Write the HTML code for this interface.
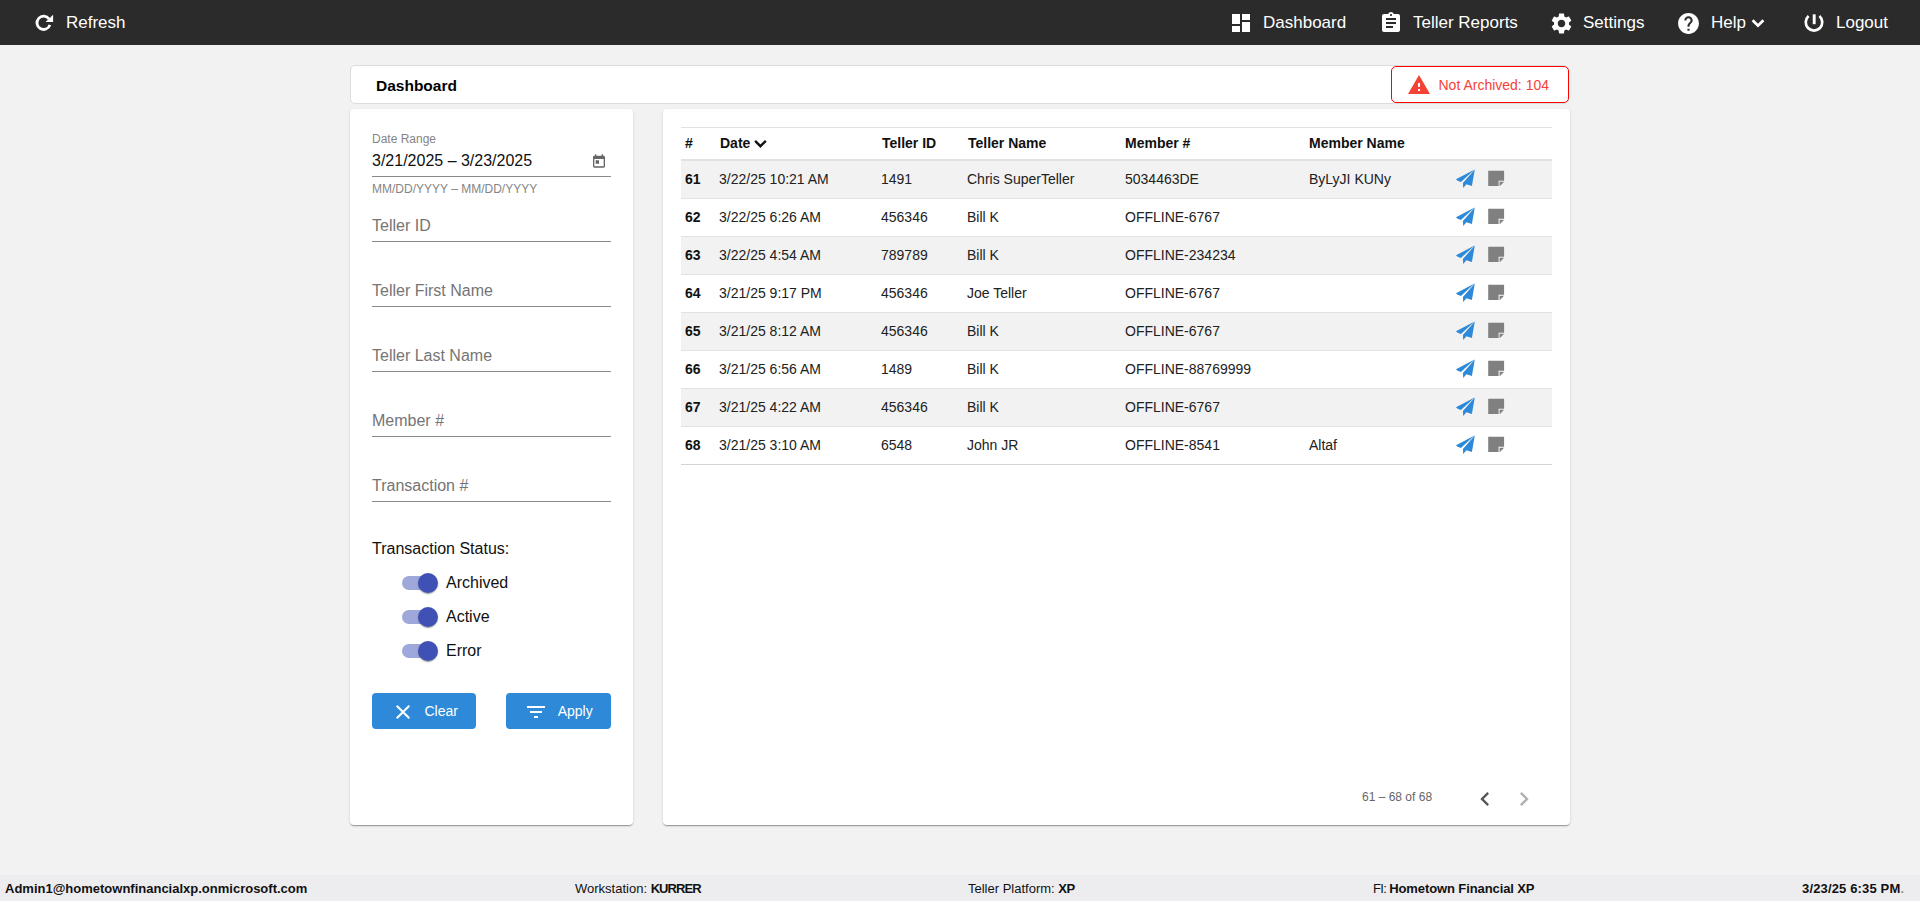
<!DOCTYPE html>
<html><head><meta charset="utf-8">
<style>
*{box-sizing:border-box;margin:0;padding:0}
html,body{width:1920px;height:901px;overflow:hidden;background:#f2f2f2;font-family:"Liberation Sans",sans-serif;color:#212121}
.abs{position:absolute;white-space:nowrap}
.nav{position:absolute;left:0;top:0;width:1920px;height:45px;background:#2b2b2b;color:#fff}
.nav .it{position:absolute;top:0;height:45px;display:flex;align-items:center;font-size:17px;white-space:nowrap}
.nav svg{fill:#fff;display:block}
.card{position:absolute;background:#fff;border-radius:4px;box-shadow:0 2px 1px -1px rgba(0,0,0,.2),0 1px 1px 0 rgba(0,0,0,.14),0 1px 3px 0 rgba(0,0,0,.12)}
.lbl{color:#757575}
.uline{position:absolute;height:1px;background:#8a8a8a}
.cell{position:absolute;white-space:nowrap;font-size:14px;color:#212121}
.hcell{position:absolute;white-space:nowrap;font-size:14px;font-weight:bold;color:#111}
.footer{position:absolute;left:0;top:875px;width:1920px;height:26px;background:#ededf0;font-size:13px;color:#111}
.footer .abs{top:6px}
.btn{position:absolute;background:#2e8ad8;border-radius:4px;color:#fff;font-size:14px}
</style></head><body>

<div class="nav">
<svg class="abs" style="left:35px;top:14px" width="20" height="18" viewBox="0 0 20 18"><path d="M14.05 5.04 A6.65 6.65 0 1 0 14.92 10.9" fill="none" stroke="#fff" stroke-width="2.8"/><path d="M18.1 0.8 L18.1 8 L10.5 8 Z" fill="#fff"/></svg>
<div class="abs" style="left:66px;top:13px;font-size:17px">Refresh</div>
<div class="it" style="left:1229px">
    <svg width="24" height="24" viewBox="0 0 24 24"><path d="M3 13h8V3H3v10zm0 8h8v-6H3v6zm10 0h8V11h-8v10zm0-18v6h8V3h-8z"/></svg>
    <span style="margin-left:10px">Dashboard</span>
  </div>
  <div class="it" style="left:1379px">
    <svg width="24" height="24" viewBox="0 0 24 24"><path d="M19 3h-4.18C14.4 1.840 13.3 1 12 1c-1.3 0-2.4.84-2.82 2H5c-1.1 0-2 .9-2 2v14c0 1.1.9 2 2 2h14c1.1 0 2-.9 2-2V5c0-1.1-.9-2-2-2zm-7 0c.55 0 1 .45 1 1s-.45 1-1 1-1-.45-1-1 .45-1 1-1zm2 14H7v-2h7v2zm3-4H7v-2h10v2zm0-4H7V7h10v2z"/></svg>
    <span style="margin-left:10px">Teller Reports</span>
  </div>
  <div class="it" style="left:1549px">
    <svg width="25" height="25" viewBox="0 0 24 24" style="position:relative;top:0.7px"><path d="M19.14 12.94c.04-.3.06-.61.06-.94 0-.32-.02-.64-.07-.94l2.03-1.58c.18-.14.23-.41.12-.61l-1.920-3.32c-.12-.22-.37-.29-.59-.22l-2.39.96c-.5-.38-1.03-.7-1.62-.94l-.36-2.54c-.04-.24-.24-.41-.48-.41h-3.84c-.24 0-.43.17-.47.41l-.36 2.54c-.59.24-1.13.57-1.62.94l-2.39-.96c-.22-.08-.47 0-.59.22L2.74 8.87c-.12.21-.08.47.12.61l2.03 1.58c-.05.3-.09.63-.09.94s.02.64.07.94l-2.03 1.58c-.18.14-.23.41-.12.61l1.92 3.32c.12.22.37.29.59.22l2.39-.96c.5.38 1.03.7 1.62.94l.36 2.54c.05.24.24.41.48.41h3.84c.24 0 .44-.17.47-.41l.36-2.54c.59-.24 1.13-.56 1.62-.94l2.39.96c.22.08.47 0 .59-.22l1.92-3.32c.12-.22.07-.47-.12-.61l-2.01-1.58zM12 15.6c-1.98 0-3.6-1.62-3.6-3.6s1.62-3.6 3.6-3.6 3.6 1.62 3.6 3.6-1.62 3.6-3.6 3.6z"/></svg>
    <span style="margin-left:9px">Settings</span>
  </div>
  <div class="it" style="left:1676px">
    <svg width="25" height="25" viewBox="0 0 24 24" style="position:relative;top:0.7px"><path d="M12 2C6.48 2 2 6.48 2 12s4.48 10 10 10 10-4.48 10-10S17.52 2 12 2zm1 17h-2v-2h2v2zm2.07-7.75l-.9.92C13.45 12.9 13 13.5 13 15h-2v-.5c0-1.1.45-2.1 1.17-2.83l1.24-1.26c.37-.36.59-.86.59-1.41 0-1.100-.9-2-2-2s-2 .9-2 2H8c0-2.21 1.79-4 4-4s4 1.79 4 4c0 .88-.36 1.68-.93 2.25z"/></svg>
    <span style="margin-left:10px">Help</span>
  </div>
  <svg class="abs" style="left:1750px;top:16px" width="16" height="14" viewBox="0 0 16 14"><path d="M2.6 4.2 L8 9.6 L13.4 4.2" fill="none" stroke="#fff" stroke-width="2.7"/></svg>
  <svg class="abs" style="left:1802px;top:10px" width="24" height="24" viewBox="0 0 24 24"><path d="M17.41 6.07 A8.25 8.25 0 1 1 6.59 6.07" fill="none" stroke="#fff" stroke-width="2.7"/><rect x="10.75" y="4.3" width="2.9" height="9.9" fill="#fff"/></svg>
  <div class="abs" style="left:1836px;top:13px;font-size:17px">Logout</div>
</div>
<div class="abs" style="left:350px;top:65px;width:1219px;height:39px;background:#fff;border:1px solid #dcdcdc;border-radius:5px"></div>
<div class="abs" style="left:376px;top:77px;font-size:15.5px;font-weight:bold;color:#000">Dashboard</div>
<div class="abs" style="left:1391px;top:66px;width:178px;height:37px;border:1px solid #ff0000;border-radius:5px;background:#fff"></div>
<svg class="abs" style="left:1406.5px;top:73px" width="24" height="24" viewBox="0 0 24 24"><path fill="#f44336" d="M1 21h22L12 2 1 21zm12-3h-2v-2h2v2zm0-4h-2v-4h2v4z"/></svg>
<div class="abs" style="left:1438.5px;top:77px;font-size:14px;color:#f44336">Not Archived: 104</div>
<div class="card" style="left:350px;top:109px;width:283px;height:716px"></div>
<div class="abs" style="left:372px;top:131.5px;font-size:12px;color:#858585">Date Range</div>
<div class="abs" style="left:372px;top:152px;font-size:16px;color:#111">3/21/2025 – 3/23/2025</div>
<svg class="abs" style="left:591.2px;top:152.7px" width="16" height="16" viewBox="0 0 24 24"><path fill="#666" d="M19 4h-1V2h-2v2H8V2H6v2H5c-1.11 0-1.99.9-1.99 2L3 20a2 2 0 0 0 2 2h14c1.1 0 2-.9 2-2V6c0-1.1-.9-2-2-2zm0 16H5V9h14v11zM7 11h5v5H7z"/></svg>
<div class="uline" style="left:372px;top:176px;width:239px"></div>
<div class="abs" style="left:372px;top:182px;font-size:12px;color:#858585">MM/DD/YYYY – MM/DD/YYYY</div>
<div class="abs lbl" style="left:372px;top:217px;font-size:16px">Teller ID</div>
<div class="uline" style="left:372px;top:241px;width:239px"></div>
<div class="abs lbl" style="left:372px;top:282px;font-size:16px">Teller First Name</div>
<div class="uline" style="left:372px;top:306px;width:239px"></div>
<div class="abs lbl" style="left:372px;top:347px;font-size:16px">Teller Last Name</div>
<div class="uline" style="left:372px;top:371px;width:239px"></div>
<div class="abs lbl" style="left:372px;top:412px;font-size:16px">Member #</div>
<div class="uline" style="left:372px;top:436px;width:239px"></div>
<div class="abs lbl" style="left:372px;top:477px;font-size:16px">Transaction #</div>
<div class="uline" style="left:372px;top:501px;width:239px"></div>
<div class="abs" style="left:372px;top:540px;font-size:16px;color:#111">Transaction Status:</div>
<div class="abs" style="left:402px;top:576px;width:34px;height:14px;border-radius:7px;background:#9fa8da"></div>
<div class="abs" style="left:418px;top:573px;width:20px;height:20px;border-radius:50%;background:#3f51b5;box-shadow:0 2px 1px -1px rgba(0,0,0,.2),0 1px 1px 0 rgba(0,0,0,.14),0 1px 3px 0 rgba(0,0,0,.12)"></div>
<div class="abs" style="left:446px;top:574px;font-size:16px;color:#111">Archived</div>
<div class="abs" style="left:402px;top:610px;width:34px;height:14px;border-radius:7px;background:#9fa8da"></div>
<div class="abs" style="left:418px;top:607px;width:20px;height:20px;border-radius:50%;background:#3f51b5;box-shadow:0 2px 1px -1px rgba(0,0,0,.2),0 1px 1px 0 rgba(0,0,0,.14),0 1px 3px 0 rgba(0,0,0,.12)"></div>
<div class="abs" style="left:446px;top:608px;font-size:16px;color:#111">Active</div>
<div class="abs" style="left:402px;top:644px;width:34px;height:14px;border-radius:7px;background:#9fa8da"></div>
<div class="abs" style="left:418px;top:641px;width:20px;height:20px;border-radius:50%;background:#3f51b5;box-shadow:0 2px 1px -1px rgba(0,0,0,.2),0 1px 1px 0 rgba(0,0,0,.14),0 1px 3px 0 rgba(0,0,0,.12)"></div>
<div class="abs" style="left:446px;top:642px;font-size:16px;color:#111">Error</div>
<div class="btn" style="left:372px;top:693px;width:104px;height:36px"></div>
<svg class="abs" style="left:390.7px;top:700.3px" width="24" height="24" viewBox="0 0 24 24"><path fill="#fff" d="M19 6.41L17.59 5 12 10.59 6.41 5 5 6.410 10.59 12 5 17.59 6.41 19 12 13.41 17.59 19 19 17.59 13.41 12z"/></svg>
<div class="abs" style="left:424.5px;top:703px;font-size:14px;color:#fff">Clear</div>
<div class="btn" style="left:506px;top:693px;width:105px;height:36px"></div>
<svg class="abs" style="left:524px;top:700px" width="24" height="24" viewBox="0 0 24 24"><path fill="#fff" d="M10 18h4v-2h-4v2zM3 6v2h18V6H3zm3 7h12v-2H6v2z"/></svg>
<div class="abs" style="left:557.7px;top:703px;font-size:14px;color:#fff">Apply</div>
<div class="card" style="left:663px;top:109px;width:907px;height:716px"></div>
<div class="abs" style="left:681px;top:127px;width:871px;height:1px;background:#dfe2e6"></div>
<div class="hcell" style="left:685px;top:135px">#</div>
<div class="hcell" style="left:720px;top:135px">Date</div>
<div class="hcell" style="left:882px;top:135px">Teller ID</div>
<div class="hcell" style="left:968px;top:135px">Teller Name</div>
<div class="hcell" style="left:1125px;top:135px">Member #</div>
<div class="hcell" style="left:1309px;top:135px">Member Name</div>
<svg class="abs" style="left:753px;top:136px" width="15" height="15" viewBox="0 0 15 15"><path d="M2.1 4.85 L7.45 10.2 L12.8 4.85" fill="none" stroke="#111" stroke-width="2.4"/></svg>
<div class="abs" style="left:681px;top:159px;width:871px;height:2px;background:#dfe2e6"></div>
<div class="abs" style="left:681px;top:161px;width:871px;height:38px;background:#f2f2f2;border-bottom:1px solid #e0e2e6"></div>
<div class="hcell" style="left:685px;top:171px">61</div>
<div class="cell" style="left:719px;top:171px">3/22/25 10:21 AM</div>
<div class="cell" style="left:881px;top:171px">1491</div>
<div class="cell" style="left:967px;top:171px">Chris SuperTeller</div>
<div class="cell" style="left:1125px;top:171px">5034463DE</div>
<div class="cell" style="left:1309px;top:171px">ByLyJI KUNy</div>
<svg class="abs" style="left:1454px;top:166px" width="26" height="26" viewBox="0 0 26 26"><path d="M2.0 13.2 L20.6 3.4 L6.9 16.0 L3.2 14.6 Z M8.9 17.0 L20.8 3.6 L17.9 20.0 L12.4 18.2 L9.2 22.0 Z" fill="#2f89d9"/></svg>
<svg class="abs" style="left:1484px;top:166px" width="26" height="26" viewBox="0 0 26 26"><path d="M4.2 4.8 H20.1 V14.7 H14.6 V19.9 H4.2 Z M15.6 15.8 H20.1 L16.0 19.9 H15.6 Z" fill="#808080"/></svg>
<div class="abs" style="left:681px;top:199px;width:871px;height:38px;background:#fff;border-bottom:1px solid #e0e2e6"></div>
<div class="hcell" style="left:685px;top:209px">62</div>
<div class="cell" style="left:719px;top:209px">3/22/25 6:26 AM</div>
<div class="cell" style="left:881px;top:209px">456346</div>
<div class="cell" style="left:967px;top:209px">Bill K</div>
<div class="cell" style="left:1125px;top:209px">OFFLINE-6767</div>
<svg class="abs" style="left:1454px;top:204px" width="26" height="26" viewBox="0 0 26 26"><path d="M2.0 13.2 L20.6 3.4 L6.9 16.0 L3.2 14.6 Z M8.9 17.0 L20.8 3.6 L17.9 20.0 L12.4 18.2 L9.2 22.0 Z" fill="#2f89d9"/></svg>
<svg class="abs" style="left:1484px;top:204px" width="26" height="26" viewBox="0 0 26 26"><path d="M4.2 4.8 H20.1 V14.7 H14.6 V19.9 H4.2 Z M15.6 15.8 H20.1 L16.0 19.9 H15.6 Z" fill="#808080"/></svg>
<div class="abs" style="left:681px;top:237px;width:871px;height:38px;background:#f2f2f2;border-bottom:1px solid #e0e2e6"></div>
<div class="hcell" style="left:685px;top:247px">63</div>
<div class="cell" style="left:719px;top:247px">3/22/25 4:54 AM</div>
<div class="cell" style="left:881px;top:247px">789789</div>
<div class="cell" style="left:967px;top:247px">Bill K</div>
<div class="cell" style="left:1125px;top:247px">OFFLINE-234234</div>
<svg class="abs" style="left:1454px;top:242px" width="26" height="26" viewBox="0 0 26 26"><path d="M2.0 13.2 L20.6 3.4 L6.9 16.0 L3.2 14.6 Z M8.9 17.0 L20.8 3.6 L17.9 20.0 L12.4 18.2 L9.2 22.0 Z" fill="#2f89d9"/></svg>
<svg class="abs" style="left:1484px;top:242px" width="26" height="26" viewBox="0 0 26 26"><path d="M4.2 4.8 H20.1 V14.7 H14.6 V19.9 H4.2 Z M15.6 15.8 H20.1 L16.0 19.9 H15.6 Z" fill="#808080"/></svg>
<div class="abs" style="left:681px;top:275px;width:871px;height:38px;background:#fff;border-bottom:1px solid #e0e2e6"></div>
<div class="hcell" style="left:685px;top:285px">64</div>
<div class="cell" style="left:719px;top:285px">3/21/25 9:17 PM</div>
<div class="cell" style="left:881px;top:285px">456346</div>
<div class="cell" style="left:967px;top:285px">Joe Teller</div>
<div class="cell" style="left:1125px;top:285px">OFFLINE-6767</div>
<svg class="abs" style="left:1454px;top:280px" width="26" height="26" viewBox="0 0 26 26"><path d="M2.0 13.2 L20.6 3.4 L6.9 16.0 L3.2 14.6 Z M8.9 17.0 L20.8 3.6 L17.9 20.0 L12.4 18.2 L9.2 22.0 Z" fill="#2f89d9"/></svg>
<svg class="abs" style="left:1484px;top:280px" width="26" height="26" viewBox="0 0 26 26"><path d="M4.2 4.8 H20.1 V14.7 H14.6 V19.9 H4.2 Z M15.6 15.8 H20.1 L16.0 19.9 H15.6 Z" fill="#808080"/></svg>
<div class="abs" style="left:681px;top:313px;width:871px;height:38px;background:#f2f2f2;border-bottom:1px solid #e0e2e6"></div>
<div class="hcell" style="left:685px;top:323px">65</div>
<div class="cell" style="left:719px;top:323px">3/21/25 8:12 AM</div>
<div class="cell" style="left:881px;top:323px">456346</div>
<div class="cell" style="left:967px;top:323px">Bill K</div>
<div class="cell" style="left:1125px;top:323px">OFFLINE-6767</div>
<svg class="abs" style="left:1454px;top:318px" width="26" height="26" viewBox="0 0 26 26"><path d="M2.0 13.2 L20.6 3.4 L6.9 16.0 L3.2 14.6 Z M8.9 17.0 L20.8 3.6 L17.9 20.0 L12.4 18.2 L9.2 22.0 Z" fill="#2f89d9"/></svg>
<svg class="abs" style="left:1484px;top:318px" width="26" height="26" viewBox="0 0 26 26"><path d="M4.2 4.8 H20.1 V14.7 H14.6 V19.9 H4.2 Z M15.6 15.8 H20.1 L16.0 19.9 H15.6 Z" fill="#808080"/></svg>
<div class="abs" style="left:681px;top:351px;width:871px;height:38px;background:#fff;border-bottom:1px solid #e0e2e6"></div>
<div class="hcell" style="left:685px;top:361px">66</div>
<div class="cell" style="left:719px;top:361px">3/21/25 6:56 AM</div>
<div class="cell" style="left:881px;top:361px">1489</div>
<div class="cell" style="left:967px;top:361px">Bill K</div>
<div class="cell" style="left:1125px;top:361px">OFFLINE-88769999</div>
<svg class="abs" style="left:1454px;top:356px" width="26" height="26" viewBox="0 0 26 26"><path d="M2.0 13.2 L20.6 3.4 L6.9 16.0 L3.2 14.6 Z M8.9 17.0 L20.8 3.6 L17.9 20.0 L12.4 18.2 L9.2 22.0 Z" fill="#2f89d9"/></svg>
<svg class="abs" style="left:1484px;top:356px" width="26" height="26" viewBox="0 0 26 26"><path d="M4.2 4.8 H20.1 V14.7 H14.6 V19.9 H4.2 Z M15.6 15.8 H20.1 L16.0 19.9 H15.6 Z" fill="#808080"/></svg>
<div class="abs" style="left:681px;top:389px;width:871px;height:38px;background:#f2f2f2;border-bottom:1px solid #e0e2e6"></div>
<div class="hcell" style="left:685px;top:399px">67</div>
<div class="cell" style="left:719px;top:399px">3/21/25 4:22 AM</div>
<div class="cell" style="left:881px;top:399px">456346</div>
<div class="cell" style="left:967px;top:399px">Bill K</div>
<div class="cell" style="left:1125px;top:399px">OFFLINE-6767</div>
<svg class="abs" style="left:1454px;top:394px" width="26" height="26" viewBox="0 0 26 26"><path d="M2.0 13.2 L20.6 3.4 L6.9 16.0 L3.2 14.6 Z M8.9 17.0 L20.8 3.6 L17.9 20.0 L12.4 18.2 L9.2 22.0 Z" fill="#2f89d9"/></svg>
<svg class="abs" style="left:1484px;top:394px" width="26" height="26" viewBox="0 0 26 26"><path d="M4.2 4.8 H20.1 V14.7 H14.6 V19.9 H4.2 Z M15.6 15.8 H20.1 L16.0 19.9 H15.6 Z" fill="#808080"/></svg>
<div class="abs" style="left:681px;top:427px;width:871px;height:38px;background:#fff;border-bottom:1px solid #d3d3d3"></div>
<div class="hcell" style="left:685px;top:437px">68</div>
<div class="cell" style="left:719px;top:437px">3/21/25 3:10 AM</div>
<div class="cell" style="left:881px;top:437px">6548</div>
<div class="cell" style="left:967px;top:437px">John JR</div>
<div class="cell" style="left:1125px;top:437px">OFFLINE-8541</div>
<div class="cell" style="left:1309px;top:437px">Altaf</div>
<svg class="abs" style="left:1454px;top:432px" width="26" height="26" viewBox="0 0 26 26"><path d="M2.0 13.2 L20.6 3.4 L6.9 16.0 L3.2 14.6 Z M8.9 17.0 L20.8 3.6 L17.9 20.0 L12.4 18.2 L9.2 22.0 Z" fill="#2f89d9"/></svg>
<svg class="abs" style="left:1484px;top:432px" width="26" height="26" viewBox="0 0 26 26"><path d="M4.2 4.8 H20.1 V14.7 H14.6 V19.9 H4.2 Z M15.6 15.8 H20.1 L16.0 19.9 H15.6 Z" fill="#808080"/></svg>
<div class="abs" style="left:1362px;top:790px;font-size:12px;color:#666">61 – 68 of 68</div>
<svg class="abs" style="left:1470.6px;top:785px" width="28" height="28" viewBox="0 0 24 24"><path d="M15.41 7.41L14 6l-6 6 6 6 1.41-1.41L10.83 12z" fill="#555"/></svg>
<svg class="abs" style="left:1510px;top:785px" width="28" height="28" viewBox="0 0 24 24"><path d="M10 6L8.59 7.41 13.17 12l-4.58 4.59L10 18l6-6z" fill="#b0b0b0"/></svg>
<div class="footer">
  <div class="abs" style="left:5px;font-weight:bold">Admin1@hometownfinancialxp.onmicrosoft.com</div>
  <div class="abs" style="left:575px">Workstation: <b style="letter-spacing:-0.9px">KURRER</b></div>
  <div class="abs" style="left:968px">Teller Platform: <b style="letter-spacing:-0.5px">XP</b></div>
  <div class="abs" style="left:1373px;letter-spacing:-0.6px">FI:</div>
  <div class="abs" style="left:1389.2px;font-weight:bold;letter-spacing:-0.1px">Hometown Financial XP</div>
  <div class="abs" style="left:1802px;font-weight:bold;letter-spacing:0.15px">3/23/25 6:35 PM<span style="color:#999">.</span></div>
</div>
</body></html>
